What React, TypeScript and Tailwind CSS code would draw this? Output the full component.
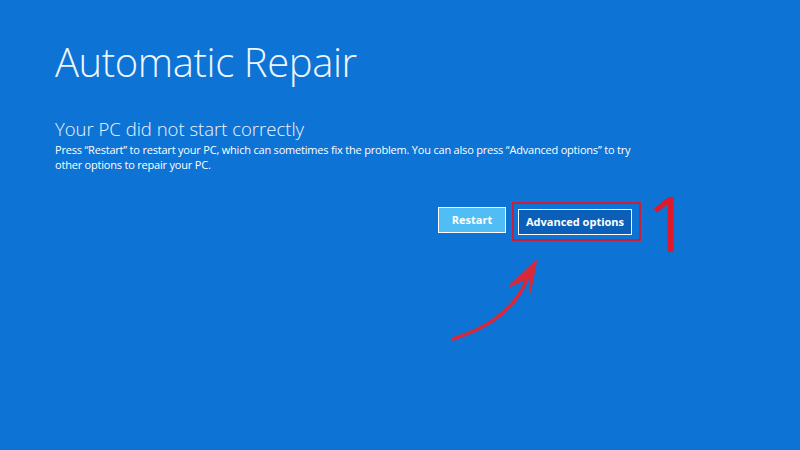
import React from "react";

export default function App() {
  return (
    <div className="relative w-[800px] h-[450px] overflow-hidden bg-[#0d73d4] text-white" style={{ fontFamily: '"Open Sans", "Noto Sans", sans-serif' }}>
      <div className="pl-[55px] pt-[34px]">
        <h1 className="text-[40px] leading-[56px] font-light tracking-[-0.4px] text-[#eef6ff]">Automatic Repair</h1>
        <h2 className="mt-[27px] text-[18.5px] leading-[24px] font-light text-[#eef6ff]">Your PC did not start correctly</h2>
        <p className="mt-[1px] w-[600px] text-[11px] leading-[15px] tracking-[-0.2px] text-white">
          Press “Restart” to restart your PC, which can sometimes fix the problem. You can also press “Advanced options” to try other options to repair your PC.
        </p>
      </div>
      <div className="flex items-start pl-[438px] mt-[22px]">
        <button className="mt-[13px] w-[68px] h-[26px] bg-[#50bdf5] border border-white text-[11px] font-bold text-white">Restart</button>
        <div className="mt-[8px] ml-[6px] border-2 border-[#c8203a] pl-[4px] pr-[7px] py-[4px]">
          <button className="w-[114px] h-[26px] bg-[#0c5fb8] border border-white text-[11px] font-bold text-white">Advanced options</button>
        </div>
        <span className="ml-[6px] -mt-[3px] text-[76px] leading-[64px] font-normal text-[#e0192a]">1</span>
      </div>
      <svg className="absolute left-0 top-0" width="800" height="450">
        <path d="M453 339 C 480 330, 505 318, 522 290 L 531 270" fill="none" stroke="#d8283a" strokeWidth="3.5" strokeLinecap="round" />
        <path d="M536 261 L 510 286 L 531 276 L 530 292 Z" fill="#d8283a" stroke="#d8283a" strokeWidth="2" strokeLinejoin="round" />
      </svg>
    </div>
  );
}
